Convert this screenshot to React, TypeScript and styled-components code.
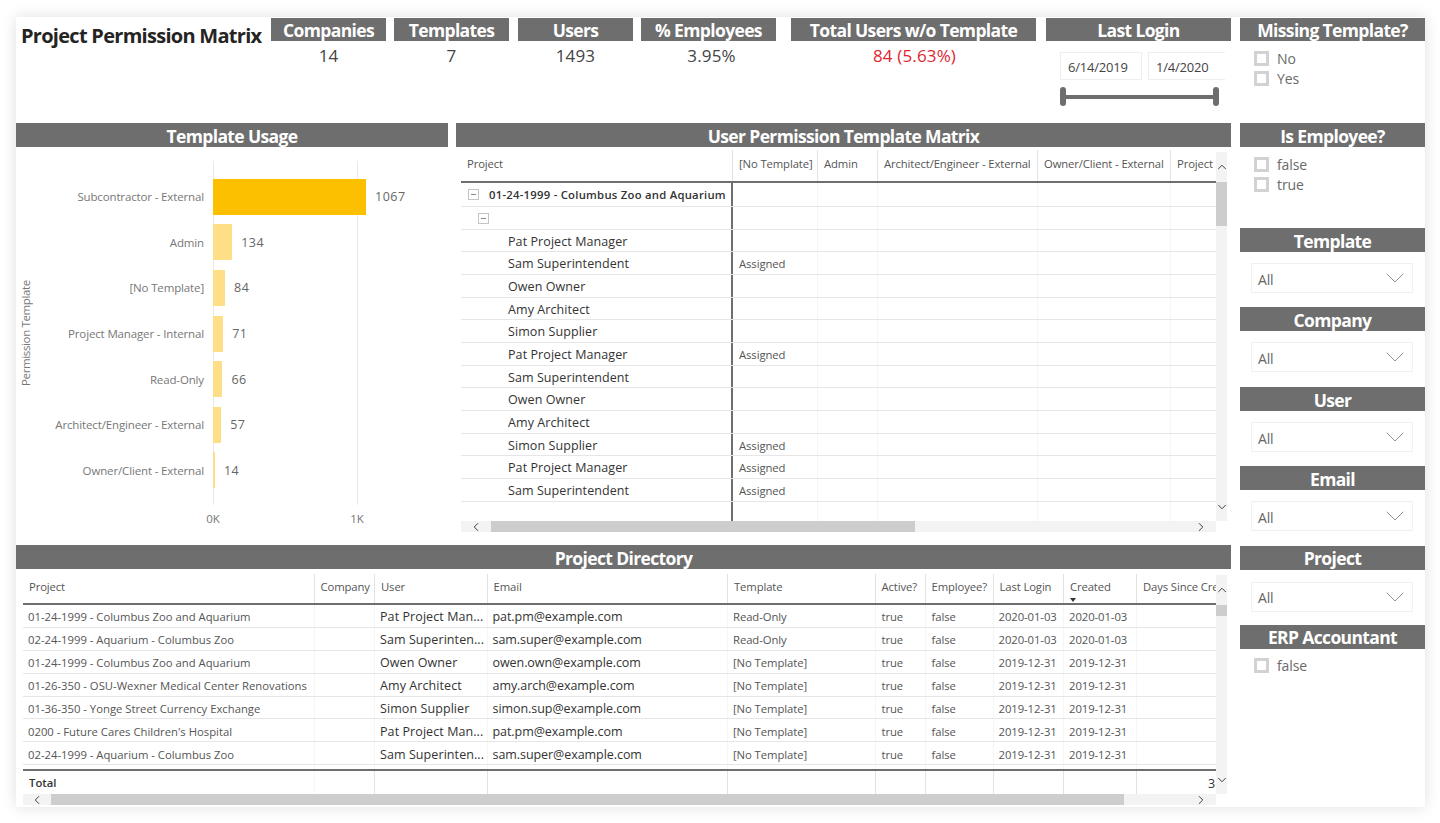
import React from "react";
import styled, { createGlobalStyle } from "styled-components";
import { ChevronUp, ChevronDown, ChevronLeft, ChevronRight } from "lucide-react";

const Global = createGlobalStyle`
  html, body { margin: 0; padding: 0; background: #fff; height: 100%; overflow: hidden; }
  * { box-sizing: border-box; }
  body { font-family: "Open Sans", "Noto Sans", sans-serif; color: #444; }
`;

const Page = styled.div`
  width: 1440px; height: 823px; padding: 17px 15px 16px 16px; background: #fff;
`;
const Canvas = styled.div`
  width: 1409px; height: 790px; background: #fff; display: grid; grid-template-columns: 1215px 185px; column-gap: 9px;
  padding-top: 1px; box-shadow: 0 0 14px rgba(0,0,0,.13);
`;
const MainCol = styled.div`display: flex; flex-direction: column;`;
const SideCol = styled.div`display: flex; flex-direction: column;`;
const Header = styled.div`
  height: ${p => p.$h ?? 24}px; padding-top: ${p => p.$h === 23 ? 0 : 1.5}px; background: #6e6e6e; color: #fff; display: flex; align-items: center; justify-content: center;
  font-size: 17.5px; font-weight: 700; letter-spacing: -.64px; white-space: nowrap; flex: none;
`;
const TopRow = styled.div`height: 105px; display: flex; flex: none;`;
const Title = styled.h1`
  margin: 0; width: 255px; flex: none; padding: 4px 0 0 5px; font-size: 20px; line-height: 27px; font-weight: 700;
  color: #252423; letter-spacing: -.72px; white-space: nowrap;
`;
const Kpi = styled.div`width: ${p => p.$w}px; margin-right: ${p => p.$gap}px; flex: none; display: flex; flex-direction: column;`;
const KpiValue = styled.div`
  text-align: center; font-size: 17px; line-height: 24px; margin-top: 3px; padding-left: ${p => p.$shift ?? 0}px; letter-spacing: .15px; color: ${p => p.$red ? "#e0252f" : "#444"};
`;
const DateRow = styled.div`display: flex; gap: 6px; padding: 11px 0 0 14px; overflow: hidden;`;
const DateBox = styled.div`
  width: ${p => p.$w}px; height: 28px; flex: none; border: 1px solid #eee; ${p => p.$open && "border-right: 0;"} display: flex; align-items: center; padding: 1px 0 0 7px;
  font-size: 13px; letter-spacing: -.2px; color: #444;
`;
const Slider = styled.div`margin: 7px 0 0 14px; width: 159px; height: 19px; display: flex; align-items: center; justify-content: space-between; position: relative;`;
const SliderLine = styled.div`position: absolute; left: 2px; right: 2px; top: 7.5px; height: 4px; background: #6e6e6e;`;
const Handle = styled.div`width: 6px; height: 19px; border-radius: 3px; background: #6e6e6e; position: relative;`;

const MidRow = styled.div`height: 422px; display: grid; grid-template-columns: 432px 775px; column-gap: 8px; flex: none;`;
const Panel = styled.div`display: flex; flex-direction: column; min-width: 0;`;
const Chart = styled.div`display: flex; height: 398px;`;
const AxisTitle = styled.div`
  width: 18px; margin-left: 2px; flex: none; writing-mode: vertical-rl; transform: rotate(180deg); text-align: center; font-size: 11.5px; color: #777;
  letter-spacing: -.36px; padding-top: 25px; white-space: nowrap;
`;
const Plot = styled.div`position: relative; flex: 1; padding-top: 27px;`;
const GridLine = styled.div`position: absolute; top: 14px; height: 344px; width: 1px; background: #eaeaea; left: ${p => p.$x}px;`;
const BarRow = styled.div`height: 45.6px; display: flex; align-items: center; position: relative;`;
const BarLabel = styled.div`width: 168px; margin-right: 9px; flex: none; text-align: right; font-size: 11.5px; letter-spacing: -.14px; color: #777; white-space: nowrap;`;
const Bar = styled.div`height: 36px; background: ${p => p.$on ? "#fcc000" : "#fede86"}; flex: none;`;
const BarValue = styled.div`margin-left: 9px; font-size: 12.5px; font-weight: 400; letter-spacing: .45px; color: #666;`;
const Ticks = styled.div`margin: 19px 0 0 177px; width: 144px; display: flex; justify-content: space-between; height: 14px;`;
const Tick = styled.div`width: 0; display: flex; justify-content: center; font-size: 11.5px; line-height: 14px; color: #777;`;

const TableBox = styled.div`display: grid; margin: ${p => p.$m}; width: ${p => p.$w}px; grid-template-columns: 1fr 11px; grid-template-rows: ${p => p.$bodyH}px 11px; flex: none;`;
const Viewport = styled.div`overflow: hidden; min-width: 0; display: flex; flex-direction: column;`;
const Row = styled.div`
  display: grid; grid-template-columns: ${p => p.$cols}; width: ${p => p.$tw}px; height: ${p => p.$h}px; flex: none;
  border-bottom: ${p => p.$thick ? "2.5px solid #6e6e6e" : "1.5px solid #e6e6e6"};
  ${p => p.$top && "border-top: 2.5px solid #6e6e6e;"}
`;
const Cell = styled.div`
  min-width: 0; padding: ${p => p.$hd ? 0 : p.$bold ? 0 : 1.5}px ${p => p.$right ? 0 : 6}px ${p => p.$hd ? 4 : 0}px ${p => p.$pad ?? 6}px; display: flex; align-items: center; gap: 10px; white-space: nowrap; overflow: hidden;
  font-size: ${p => p.$large ? 12.5 : 11.3}px; letter-spacing: ${p => p.$mail ? -.06 : p.$large ? .08 : p.$bold ? .25 : p.$hd ? -.12 : p.$wide ? -.01 : -.08}px; color: ${p => p.$dark ? "#333" : "#555"};
  font-weight: ${p => p.$bold ? 600 : 400};
  justify-content: ${p => p.$right ? "flex-end" : "flex-start"};
  border-right: ${p => p.$key ? "2px solid #6e6e6e" : `1px solid ${p.$hd ? "#e2e2e2" : "#f5f5f5"}`};
  position: relative;
`;
const SortMark = styled.span`position: absolute; left: 6px; bottom: 1px; border: 3.5px solid transparent; border-top: 4px solid #333; border-bottom: 0;`;
const Expand = styled.span`
  width: 11px; height: 11px; border: 1px solid #c4c4c4; display: inline-flex; align-items: center; justify-content: center; flex: none; background: #fff;
  &::after { content: ""; width: 5px; height: 1px; background: #888; }
`;
const VTrack = styled.div`background: #f3f3f3; display: flex; flex-direction: column; align-items: center; margin-top: ${p => p.$mt}px;`;
const HTrack = styled.div`background: #f3f3f3; display: flex; align-items: center; grid-column: 1;`;
const ArrowUp = styled.div`height: ${p => p.$h}px; flex: none; display: flex; align-items: center; justify-content: center; color: #333;`;
const ArrowDown = styled.div`flex: 1; display: flex; align-items: flex-end; padding-bottom: 7px; color: #333;`;
const ArrowL = styled.div`width: ${p => p.$w}px; flex: none; display: flex; justify-content: center; color: #333;`;
const ArrowR = styled.div`flex: 1; display: flex; justify-content: flex-end; padding-right: 8px; color: #333;`;
const ThumbV = styled.div`width: 11px; height: ${p => p.$h}px; background: #cdcdcd; flex: none;`;
const ThumbH = styled.div`height: 11px; width: ${p => p.$w}px; background: #cdcdcd; flex: none;`;

const DirWrap = styled.div`display: flex; flex-direction: column; height: 262px;`;

const SideSec = styled.section`height: ${p => p.$h}px; flex: none; display: flex; flex-direction: column;`;
const Checks = styled.div`padding: ${p => p.$top}px 0 0 14px; display: flex; flex-direction: column; gap: 5px;`;
const Check = styled.label`display: flex; align-items: center; height: 15px; gap: 8px; font-size: 14px; letter-spacing: -.1px; color: #6a6a6a;`;
const Box = styled.span`width: 15px; height: 15px; border: 3px solid #d2d2d2; background: #fff; flex: none;`;
const Select = styled.div`
  margin: ${p => p.$mt ?? 11}px 12px 0 11px; height: 30px; border: 1.5px solid #f0f0f0; display: flex; align-items: center; justify-content: space-between;
  padding: 2px 1px 0 6px; font-size: 14px; color: #666; letter-spacing: -.2px;
`;
const SelectArrow = styled.span`display: flex; margin-top: -2px; color: #777;`;

const bars: [string, number][] = [
  ["Subcontractor - External", 1067], ["Admin", 134], ["[No Template]", 84], ["Project Manager - Internal", 71],
  ["Read-Only", 66], ["Architect/Engineer - External", 57], ["Owner/Client - External", 14],
];
const mCols = "272px 85px 60px 160px 133px 120px";
const mHead = ["Project", "[No Template]", "Admin", "Architect/Engineer - External", "Owner/Client - External", "Project"];
const mRows: [string, boolean][] = [
  ["Pat Project Manager", false], ["Sam Superintendent", true], ["Owen Owner", false], ["Amy Architect", false], ["Simon Supplier", false],
  ["Pat Project Manager", true], ["Sam Superintendent", false], ["Owen Owner", false], ["Amy Architect", false], ["Simon Supplier", true],
  ["Pat Project Manager", true], ["Sam Superintendent", true],
];
const dCols = "291.5px 60.5px 112.5px 240.5px 147.5px 50px 68px 70.5px 73px 110px";
const dHead = ["Project", "Company", "User", "Email", "Template", "Active?", "Employee?", "Last Login", "Created", "Days Since Created"];
const dRows = [
  ["01-24-1999 - Columbus Zoo and Aquarium", "Pat Project Man...", "pat.pm@example.com", "Read-Only", "2020-01-03"],
  ["02-24-1999 - Aquarium - Columbus Zoo", "Sam Superinten...", "sam.super@example.com", "Read-Only", "2020-01-03"],
  ["01-24-1999 - Columbus Zoo and Aquarium", "Owen Owner", "owen.own@example.com", "[No Template]", "2019-12-31"],
  ["01-26-350 - OSU-Wexner Medical Center Renovations", "Amy Architect", "amy.arch@example.com", "[No Template]", "2019-12-31"],
  ["01-36-350 - Yonge Street Currency Exchange", "Simon Supplier", "simon.sup@example.com", "[No Template]", "2019-12-31"],
  ["0200 - Future Cares Children's Hospital", "Pat Project Man...", "pat.pm@example.com", "[No Template]", "2019-12-31"],
  ["02-24-1999 - Aquarium - Columbus Zoo", "Sam Superinten...", "sam.super@example.com", "[No Template]", "2019-12-31"],
];
const MTW = 830, DTW = 1224;

const VBar = ({ mt, pre, h }: { mt: number; pre: number; h: number }) => (
  <VTrack $mt={mt}>
    <ArrowUp $h={pre}><ChevronUp size={14} strokeWidth={1.6} /></ArrowUp>
    <ThumbV $h={h} />
    <ArrowDown><ChevronDown size={14} strokeWidth={1.6} /></ArrowDown>
  </VTrack>
);
const HBar = ({ pre, w }: { pre: number; w: number }) => (
  <HTrack>
    <ArrowL $w={pre}><ChevronLeft size={14} strokeWidth={1.6} /></ArrowL>
    <ThumbH $w={w} />
    <ArrowR><ChevronRight size={14} strokeWidth={1.6} /></ArrowR>
  </HTrack>
);

const Kpis = [
  { t: "Companies", v: "14", w: 115, g: 8 }, { t: "Templates", v: "7", w: 115, g: 9 }, { t: "Users", v: "1493", w: 115, g: 8 },
  { t: "% Employees", v: "3.95%", w: 135, g: 15, shift: 6 }, { t: "Total Users w/o Template", v: "84 (5.63%)", w: 245, g: 10, red: true, shift: 2 },
];
const Drop = ({ title, h, mt }: { title: string; h: number; mt?: number }) => (
  <SideSec $h={h}>
    <Header>{title}</Header>
    <Select $mt={mt}>All<SelectArrow><ChevronDown size={32} strokeWidth={0.6} /></SelectArrow></Select>
  </SideSec>
);

export default function App() {
  return (
    <Page>
      <Global />
      <Canvas>
        <MainCol>
          <TopRow>
            <Title>Project Permission Matrix</Title>
            {Kpis.map(k => (
              <Kpi key={k.t} $w={k.w} $gap={k.g}>
                <Header $h={23}>{k.t}</Header>
                <KpiValue $red={k.red} $shift={k.shift}>{k.v}</KpiValue>
              </Kpi>
            ))}
            <Kpi $w={185} $gap={0}>
              <Header $h={23}>Last Login</Header>
              <DateRow>
                <DateBox $w={82}>6/14/2019</DateBox>
                <DateBox $w={77} $open>1/4/2020</DateBox>
              </DateRow>
              <Slider><SliderLine /><Handle /><Handle /></Slider>
            </Kpi>
          </TopRow>
          <MidRow>
            <Panel>
              <Header>Template Usage</Header>
              <Chart>
                <AxisTitle>Permission Template</AxisTitle>
                <Plot>
                  <GridLine $x={177} />
                  <GridLine $x={321} />
                  {bars.map(([n, v], i) => (
                    <BarRow key={n}>
                      <BarLabel>{n}</BarLabel>
                      <Bar $on={i === 0} style={{ width: v * 0.1435 }} />
                      <BarValue>{v}</BarValue>
                    </BarRow>
                  ))}
                  <Ticks><Tick>0K</Tick><Tick>1K</Tick></Ticks>
                </Plot>
              </Chart>
            </Panel>
            <Panel>
              <Header>User Permission Template Matrix</Header>
              <TableBox $m="3px 0 0 5px" $w={766} $bodyH={371}>
                <Viewport>
                  <Row $cols={mCols} $tw={MTW} $h={33} $thick>
                    {mHead.map((h, i) => <Cell key={i} $hd>{h}</Cell>)}
                  </Row>
                  <Row $cols={mCols} $tw={MTW} $h={23.5}>
                    <Cell $key $bold $dark $pad={7}><Expand />01-24-1999 - Columbus Zoo and Aquarium</Cell>
                    {[0, 1, 2, 3, 4].map(i => <Cell key={i} />)}
                  </Row>
                  <Row $cols={mCols} $tw={MTW} $h={23}>
                    <Cell $key $pad={17}><Expand /></Cell>
                    {[0, 1, 2, 3, 4].map(i => <Cell key={i} />)}
                  </Row>
                  {mRows.map(([n, a], r) => (
                    <Row key={r} $cols={mCols} $tw={MTW} $h={22.7}>
                      <Cell $key $large $dark $pad={47}>{n}</Cell>
                      <Cell>{a ? "Assigned" : ""}</Cell>
                      {[0, 1, 2, 3].map(i => <Cell key={i} />)}
                    </Row>
                  ))}
                  <Row $cols={mCols} $tw={MTW} $h={20} style={{ borderBottom: 0 }}>
                    <Cell $key />
                    {[0, 1, 2, 3, 4].map(i => <Cell key={i} />)}
                  </Row>
                </Viewport>
                <VBar mt={2} pre={30} h={44} />
                <HBar pre={30} w={424} />
              </TableBox>
            </Panel>
          </MidRow>
          <DirWrap>
            <Header>Project Directory</Header>
            <TableBox $m="5px 0 0 7px" $w={1204} $bodyH={220}>
              <Viewport>
                <Row $cols={dCols} $tw={DTW} $h={31} $thick>
                  {dHead.map((h, i) => (
                    <Cell key={i} $hd>{h}{h === "Created" && <SortMark />}</Cell>
                  ))}
                </Row>
                {dRows.map((r, i) => (
                  <Row key={i} $cols={dCols} $tw={DTW} $h={22.9}>
                    <Cell $pad={5} $wide>{r[0]}</Cell>
                    <Cell />
                    <Cell $large $dark $pad={5}>{r[1]}</Cell>
                    <Cell $large $mail $dark $pad={5}>{r[2]}</Cell>
                    <Cell $pad={5}>{r[3]}</Cell>
                    <Cell>true</Cell>
                    <Cell>false</Cell>
                    <Cell $pad={5}>{r[4]}</Cell>
                    <Cell $pad={5}>{r[4]}</Cell>
                    <Cell />
                  </Row>
                ))}
                <Row $cols={dCols} $tw={DTW} $h={4} style={{ borderBottom: 0 }}>
                  {dHead.map((h, i) => <Cell key={i} />)}
                </Row>
                <Row $cols={dCols} $tw={DTW} $h={25} $top style={{ borderBottom: 0 }}>
                  <Cell $bold $dark style={{ letterSpacing: 0 }}>Total</Cell>
                  {[0, 1, 2, 3, 4, 5, 6, 7].map(i => <Cell key={i} $hd />)}
                  <Cell $large $dark style={{ paddingLeft: 71 }}>3</Cell>
                </Row>
              </Viewport>
              <VBar mt={1} pre={30} h={11} />
              <HBar pre={28} w={1073} />
            </TableBox>
          </DirWrap>
        </MainCol>
        <SideCol>
          <SideSec $h={105}>
            <Header $h={23}>Missing Template?</Header>
            <Checks $top={10}>
              <Check><Box />No</Check>
              <Check><Box />Yes</Check>
            </Checks>
          </SideSec>
          <SideSec $h={105}>
            <Header>Is Employee?</Header>
            <Checks $top={10}>
              <Check><Box />false</Check>
              <Check><Box />true</Check>
            </Checks>
          </SideSec>
          <Drop title="Template" h={79} />
          <Drop title="Company" h={80} />
          <Drop title="User" h={79} />
          <Drop title="Email" h={79.5} />
          <Drop title="Project" h={79} mt={12} />
          <SideSec $h={100}>
            <Header>ERP Accountant</Header>
            <Checks $top={9}>
              <Check><Box />false</Check>
            </Checks>
          </SideSec>
        </SideCol>
      </Canvas>
    </Page>
  );
}
